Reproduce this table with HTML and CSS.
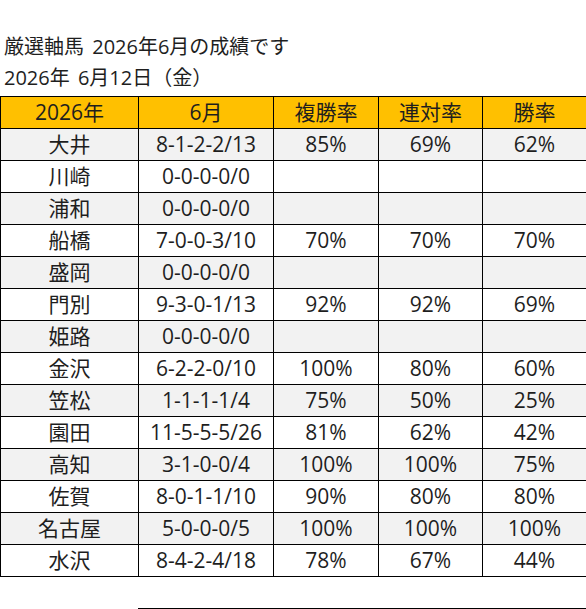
FILE: index.html
```html
<!DOCTYPE html>
<html lang="ja">
<head>
<meta charset="utf-8">
<link rel="stylesheet" href="styles.css">
</head>
<body>
<div class="title">
  <div>厳選軸馬 2026年6月の成績です</div>
  <div>2026年 6月12日（金）</div>
</div>
<table class="results">
  <colgroup>
    <col class="c1"><col class="c2"><col class="c3"><col class="c4"><col class="c5">
  </colgroup>
  <thead>
    <tr><th>2026年</th><th>6月</th><th>複勝率</th><th>連対率</th><th>勝率</th></tr>
  </thead>
  <tbody>
    <tr><td>大井</td><td>8-1-2-2/13</td><td>85%</td><td>69%</td><td>62%</td></tr>
    <tr><td>川崎</td><td>0-0-0-0/0</td><td></td><td></td><td></td></tr>
    <tr><td>浦和</td><td>0-0-0-0/0</td><td></td><td></td><td></td></tr>
    <tr><td>船橋</td><td>7-0-0-3/10</td><td>70%</td><td>70%</td><td>70%</td></tr>
    <tr><td>盛岡</td><td>0-0-0-0/0</td><td></td><td></td><td></td></tr>
    <tr><td>門別</td><td>9-3-0-1/13</td><td>92%</td><td>92%</td><td>69%</td></tr>
    <tr><td>姫路</td><td>0-0-0-0/0</td><td></td><td></td><td></td></tr>
    <tr><td>金沢</td><td>6-2-2-0/10</td><td>100%</td><td>80%</td><td>60%</td></tr>
    <tr><td>笠松</td><td>1-1-1-1/4</td><td>75%</td><td>50%</td><td>25%</td></tr>
    <tr><td>園田</td><td>11-5-5-5/26</td><td>81%</td><td>62%</td><td>42%</td></tr>
    <tr><td>高知</td><td>3-1-0-0/4</td><td>100%</td><td>100%</td><td>75%</td></tr>
    <tr><td>佐賀</td><td>8-0-1-1/10</td><td>90%</td><td>80%</td><td>80%</td></tr>
    <tr><td>名古屋</td><td>5-0-0-0/5</td><td>100%</td><td>100%</td><td>100%</td></tr>
    <tr><td>水沢</td><td>8-4-2-4/18</td><td>78%</td><td>67%</td><td>44%</td></tr>
  </tbody>
</table>
<div class="rule"></div>
</body>
</html>
```
FILE: styles.css
```css
html, body {
  margin: 0;
  padding: 0;
  background: #fff;
}
body {
  font-family: "Open Sans", "Noto Sans CJK JP", sans-serif;
  color: #1e1e1e;
  width: 586px;
}
.title {
  padding: 31px 0 0 4px;
  font-size: 20px;
  line-height: 31px;
  word-spacing: 3px;
}
.results {
  margin-top: 3px;
  border-collapse: collapse;
  table-layout: fixed;
  width: 586px;
  font-size: 21px;
}
.c1 { width: 138px; }
.c2 { width: 135px; }
.c3 { width: 105px; }
.c4 { width: 104px; }
.c5 { width: 104px; }
.results th,
.results td {
  border: 1px solid #000;
  height: 31px;
  padding: 0;
  text-align: center;
  font-weight: normal;
  line-height: 31px;
}
.results th {
  background: #ffc000;
}
.results tbody tr:nth-child(odd) td {
  background: #f2f2f2;
}
.rule {
  margin: 31px 0 0 138px;
  height: 1px;
  background: #000;
}
```
